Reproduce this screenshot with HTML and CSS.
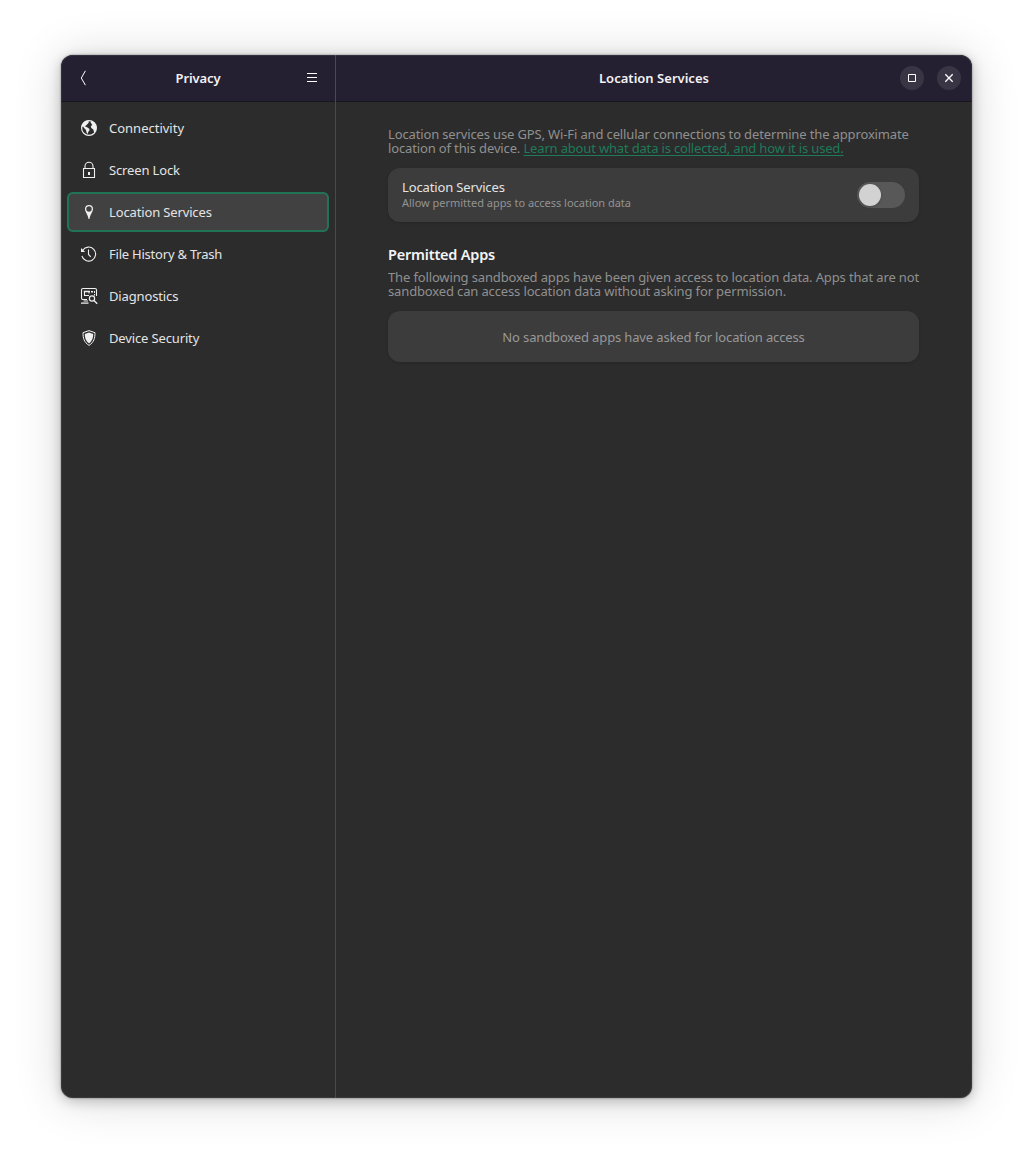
FILE: index.html
```html
<!DOCTYPE html>
<html lang="en">
<head>
<meta charset="utf-8">
<title>Location Services</title>
<link rel="stylesheet" href="styles.css">
</head>
<body>
<div class="window">
  <aside class="sidebar">
    <header class="titlebar side-title">
      <button class="plain" aria-label="Back"><svg width="16" height="16" viewBox="0 0 16 16"><path d="M9.400.8 5.300 8l4.100 7.200" fill="none" stroke="currentColor" stroke-width="1"/></svg></button>
      <h1 class="title-side">Privacy</h1>
      <button class="plain" aria-label="Menu"><svg width="16" height="16" viewBox="0 0 16 16"><path d="M3 3h10v1H3zM3 7h10v1H3zM3 11h10v1H3z" fill="currentColor"/></svg></button>
    </header>
    <nav class="nav">
      <a class="item connectivity"><svg class="icon" viewBox="0 0 18 18"><circle cx="9" cy="9" r="7.400" fill="none" stroke="currentColor" stroke-width="1.200"/><path d="M2.200 5.500 4.500 2.500 8 1.500 9 3 8 4.500 6 6.500 4.800 7.300 7 8.300 9.300 9.800 9.500 11.300 8.200 13 7.700 15 6.500 13.500 6 11 4.300 9.300 3 7.500 1.500 8zM10.500 3.200 12 2l3 2.200L16.500 8l-.7 4-1.600 1.500-.9-3L11.300 9 10.800 7.300 12.300 6z" fill="currentColor"/></svg><span>Connectivity</span></a>
      <a class="item"><svg class="icon" viewBox="0 0 18 18"><path d="M5 8V5.200a4 4 0 0 1 8 0V8M3.500 7.500h11v9h-11z" fill="none" stroke="currentColor" stroke-width="1.100"/><path d="M8 11h2v3H8z" fill="currentColor"/></svg><span>Screen Lock</span></a>
      <a class="item active"><svg class="icon" viewBox="0 0 18 18"><path fill-rule="evenodd" d="M9 2a4 4 0 0 1 4 4c0 3-3 5.500-3.500 10h-1C8 11.500 5 9 5 6a4 4 0 0 1 4-4zm0 1.300a2.700 2.700 0 1 0 0 5.400 2.700 2.700 0 0 0 0-5.400z" fill="currentColor"/></svg><span>Location Services</span></a>
      <a class="item history"><svg class="icon" viewBox="0 0 18 18"><path d="M2.800 5.200A7 7 0 1 1 1.900 11M8.500 4.500v5l2.300 2.300" fill="none" stroke="currentColor" stroke-width="1.100"/><path d="M1 3v4h4.200z" fill="currentColor"/></svg><span>File History &amp; Trash</span></a>
      <a class="item"><svg class="icon" viewBox="0 0 18 18"><path d="M16.500 9V3A1.500 1.500 0 0 0 15 1.500H3A1.500 1.500 0 0 0 1.500 3v8A1.500 1.500 0 0 0 3 12.500h4M9 8.500H4.500V4.500H9v2" fill="none" stroke="currentColor" stroke-width="1.100"/><path d="M3.800 3.800H10v1.400H3.800zM11 4h2v1.500h-2zM14 4h1v2h-1zM14 7h1v1.500h-1zM3.500 13.500H8v1H3.500zM1 15.500h7.500v1.300H1z" fill="currentColor"/><circle cx="12" cy="11.500" r="2.600" fill="none" stroke="currentColor" stroke-width="1.200"/><path d="m14 13.500 3.200 3.200" stroke="currentColor" stroke-width="1.300"/></svg><span>Diagnostics</span></a>
      <a class="item"><svg class="icon" viewBox="0 0 18 18"><path d="M9 1.600 15 3.700c0 5.500-1 9.500-6 12.700-5-3.200-6-7.200-6-12.700z" fill="none" stroke="currentColor" stroke-width="1"/><path d="m9 3.500 4.200 1.500c0 4-.9 7-4.200 9.500-3.300-2.500-4.200-5.500-4.200-9.500z" fill="currentColor"/></svg><span>Device Security</span></a>
    </nav>
  </aside>
  <main class="content">
    <header class="titlebar main-title">
      <h1>Location Services</h1>
      <div class="controls">
        <button class="round" aria-label="Maximize"><svg width="24" height="24" viewBox="0 0 24 24"><path d="M8.500 8.500h7v7h-7z" fill="none" stroke="currentColor"/></svg></button>
        <button class="round" aria-label="Close"><svg width="24" height="24" viewBox="0 0 24 24"><path d="m8.300 8.300 7.400 7.400m0-7.400-7.400 7.400" stroke="currentColor" stroke-width="1.300"/></svg></button>
      </div>
    </header>
    <div class="page">
      <p class="desc"><span class="line">Location services use GPS, Wi-Fi and cellular connections to determine the approximate</span><span class="line">location of this device. <a class="link">Learn about what data is collected, and how it is used.</a></span></p>
      <section class="card switch-row">
        <div class="row-text"><div class="row-title">Location Services</div><div class="row-sub">Allow permitted apps to access location data</div></div>
        <span class="switch"></span>
      </section>
      <h2 class="heading">Permitted Apps</h2>
      <p class="desc"><span class="line">The following sandboxed apps have been given access to location data. Apps that are not</span><span class="line">sandboxed can access location data without asking for permission.</span></p>
      <section class="card empty">No sandboxed apps have asked for location access</section>
    </div>
  </main>
</div>
</body>
</html>
```
FILE: styles.css
```css
* { box-sizing: border-box; }
body { margin: 0; padding: 55px 61px 67px; height: 1165px; background: #fff; font: 13px/14px "Noto Sans", sans-serif; letter-spacing: -.14px; color: #e4e4e4; }
.window { display: flex; width: 911px; height: 1043px; border-radius: 12px; overflow: hidden; background: #2c2c2c; box-shadow: 0 0 2px rgba(0,0,0,.5), 0 3px 13px rgba(0,0,0,.22), 0 2px 48px rgba(0,0,0,.16); position: relative; }
.window::after { content: ""; position: absolute; inset: 0; border-radius: inherit; box-shadow: inset 0 0 0 1px rgba(255,255,255,.07); pointer-events: none; }
.sidebar { width: 275px; border-right: 1px solid #4a4a4c; }
.content { flex: 1; }
.titlebar { display: flex; align-items: center; height: 47px; background: #252031; border-bottom: 1px solid #19151f; }
h1 { margin: 0; font-size: 13px; line-height: 18px; font-weight: 600; letter-spacing: .02px; white-space: nowrap; color: #f3f2f5; }
.title-side { letter-spacing: -.1px; }
button { display: flex; border: 0; padding: 0; background: none; color: #fff; }
.side-title { justify-content: space-between; padding: 0 15px; }
.main-title { display: grid; grid-template-columns: 1fr auto 1fr; padding: 0 11px; }
.main-title h1 { grid-column: 2; }
.controls { display: flex; gap: 13px; justify-content: flex-end; }
.round { width: 24px; height: 24px; border-radius: 50%; background: #3a3545; }
.nav { display: flex; flex-direction: column; gap: 2px; padding: 6px; }
.item { display: flex; align-items: center; gap: 11px; height: 40px; padding: 0 13px; border-radius: 6px; white-space: nowrap; }
.connectivity { letter-spacing: 0; }
.history { letter-spacing: -.22px; }
.active { background: #414141; box-shadow: inset 0 0 0 2px #217355; }
.icon { width: 18px; height: 18px; color: #f0f0f0; }
.page { width: 531px; margin: 25px auto 0 52px; }
.desc { margin: 0; color: #909090; }
.line { display: block; white-space: nowrap; }
.link { color: #1d7b59; letter-spacing: -.17px; text-decoration: underline; text-decoration-thickness: 1px; text-underline-offset: 2px; text-decoration-skip-ink: none; }
.card { background: #3c3c3c; border-radius: 12px; box-shadow: 0 1px 3px rgba(0,0,0,.15); display: flex; align-items: center; }
.switch-row { height: 54px; margin-top: 13px; padding: 0 14px; justify-content: space-between; }
.row-text { display: flex; flex-direction: column; gap: 2px; }
.row-sub { font-size: 11px; letter-spacing: -.02px; color: #939393; }
.switch { width: 48px; height: 26px; border-radius: 13px; background: #585858; padding: 2px; }
.switch::before { content: ""; display: block; width: 22px; height: 22px; border-radius: 50%; background: #d2d2d2; box-shadow: 0 1px 3px rgba(0,0,0,.2); }
.heading { margin: 23px 0 7px; font-size: 14.5px; line-height: 18px; font-weight: 600; letter-spacing: -.2px; color: #f4f4f4; }
.empty { height: 51px; margin-top: 13px; justify-content: center; color: #989898; }
```
